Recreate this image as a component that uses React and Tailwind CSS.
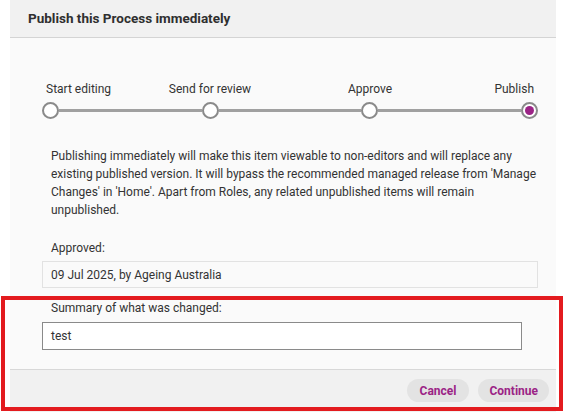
import React from "react";

function Circle({ active }) {
  return (
    <div className="w-[17px] h-[17px] shrink-0 rounded-full border-2 border-[#8a8a8a] bg-white flex items-center justify-center">
      {active && <div className="w-[9px] h-[9px] rounded-full bg-[#9b2486]" />}
    </div>
  );
}

function Line() {
  return <div className="flex-1 h-[3px] bg-[#a0a0a0]" />;
}

export default function App() {
  return (
    <div className="relative w-[564px] h-[412px] bg-white overflow-hidden text-[#333333]" style={{ fontFamily: "Roboto, 'Liberation Sans', sans-serif" }}>
      <div className="ml-[10px] w-[546px] h-[412px] bg-[#fafafa] flex flex-col">
        <div className="h-[38px] shrink-0 bg-[#f1f1f1] border-b border-[#d4d4d4] flex items-center pl-[18px]">
          <h1 className="text-[13.5px] font-bold text-[#2f2f2f]">Publish this Process immediately</h1>
        </div>
        <div className="flex-1 pl-[32px] pr-[18px] pt-[44px]">
          <div className="flex justify-between px-[8px] text-[12px] leading-[14px] h-[16px]">
            <div className="w-0 flex justify-start"><span className="whitespace-nowrap -ml-[4px]">Start editing</span></div>
            <div className="w-0 flex justify-center"><span className="whitespace-nowrap">Send for review</span></div>
            <div className="w-0 flex justify-center"><span className="whitespace-nowrap">Approve</span></div>
            <div className="w-0 flex justify-end"><span className="whitespace-nowrap -mr-[4px]">Publish</span></div>
          </div>
          <div className="flex items-center mt-[4px]">
            <Circle />
            <Line />
            <Circle />
            <Line />
            <Circle />
            <Line />
            <Circle active />
          </div>
          <p className="mt-[28px] pl-[9px] text-[12px] leading-[18px] text-[#333]">
            Publishing immediately will make this item viewable to non-editors and will replace any<br />
            existing published version. It will bypass the recommended managed release from 'Manage<br />
            Changes' in 'Home'. Apart from Roles, any related unpublished items will remain<br />
            unpublished.
          </p>
          <div className="mt-[22px] pl-[9px] text-[12px] leading-[14px]">Approved:</div>
          <div className="mt-[6px] h-[27px] border border-[#e2e2e2] bg-[#fafafa] flex items-center pl-[8px] text-[12px]">
            09 Jul 2025, by Ageing Australia
          </div>
          <div className="mt-[13px] pl-[9px] text-[12px] leading-[14px]">Summary of what was changed:</div>
          <div className="mt-[7px] w-[480px] h-[28px] border border-[#8a8a8a] bg-white flex items-center pl-[8px] text-[12px]">
            test
          </div>
        </div>
        <div className="h-[43px] shrink-0 bg-[#f1f1f1] border-t border-[#d8d8d8] flex items-start justify-end gap-[9px] pt-[9px] pr-[7px]">
          <button className="h-[23px] px-[13px] rounded-full bg-[#e3e3e3] text-[12px] font-bold text-[#9b2486]">Cancel</button>
          <button className="h-[23px] px-[11px] rounded-full bg-[#e3e3e3] text-[12px] font-bold text-[#9b2486]">Continue</button>
        </div>
      </div>
      <div className="absolute left-[1px] top-[296px] w-[562px] h-[115px] border-[4px] border-[#e31b1f] pointer-events-none" />
    </div>
  );
}
